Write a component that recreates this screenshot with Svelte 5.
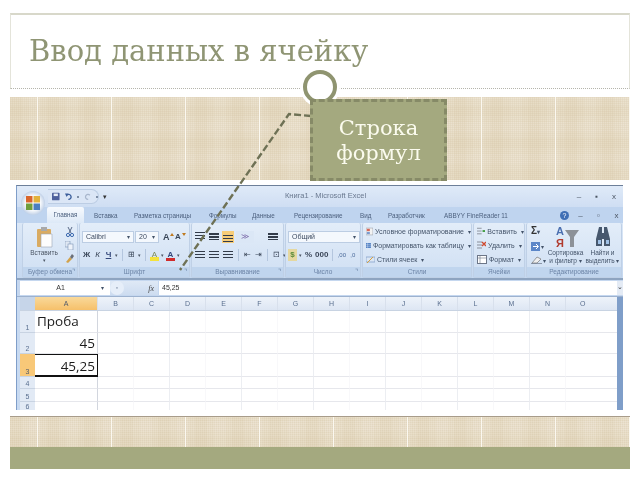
<script>
  // slide "Ввод данных в ячейку" with an Excel 2007 window pasted in
  const tabs = [
    ['Вставка', 10, 23], ['Разметка страницы', 17, 58], ['Формулы', 17, 33], ['Данные', 10, 24],
    ['Рецензирование', 18, 50], ['Вид', 16, 12], ['Разработчик', 16, 38], ['ABBYY FineReader 11', 18, 60]
  ];
  const cols = ['B', 'C', 'D', 'E', 'F', 'G', 'H', 'I', 'J', 'K', 'L', 'M', 'N', 'O'];
  const rows = [
    { n: 1, h: 22, text: 'Проба', cls: 'left' },
    { n: 2, h: 21, text: '45', cls: 'right' },
    { n: 3, h: 23, text: '45,25', cls: 'right sel' },
    { n: 4, h: 12, text: '', cls: '' },
    { n: 5, h: 13, text: '', cls: '' },
    { n: 6, h: 10, text: '', cls: '' }
  ];
</script>

<div class="slide">
  <header class="head"><h1>Ввод данных в ячейку</h1></header>
  <div class="band top"></div>

  <div class="sheet">
    <div class="win">
      <div class="titlebar">
        <div class="office">
          <svg width="22" height="22" viewBox="0 0 22 22"><rect x="4" y="4" width="6.5" height="6.5" fill="#d9662c"/><rect x="11.5" y="4" width="6.5" height="6.5" fill="#e2b23c"/><rect x="4" y="11.5" width="6.5" height="6.5" fill="#6f9e3c"/><rect x="11.5" y="11.5" width="6.5" height="6.5" fill="#4a7fc0"/></svg>
        </div>
        <div class="qat">
          <svg width="9" height="9" viewBox="0 0 9 9"><rect width="9" height="9" rx="1" fill="#4d5f9c"/><rect x="2" y="1" width="5" height="3" fill="#e6ecf6"/></svg>
          <svg width="9" height="9" viewBox="0 0 9 9"><path d="M2 3 A3 3 0 1 1 4 8" fill="none" stroke="#3c5f9c" stroke-width="1.6"/><path d="M0 1 L4 1 L2 5 Z" fill="#3c5f9c"/></svg>
          <i class="dot"></i>
          <svg width="9" height="9" viewBox="0 0 9 9"><path d="M7 3 A3 3 0 1 0 5 8" fill="none" stroke="#a8b6cc" stroke-width="1.5"/></svg>
          <i class="dot"></i>
        </div>
        <span class="drop">▾</span>
        <span class="wintitle">Книга1 - Microsoft Excel</span>
        <div class="winbtns"><span>–</span><span>▪</span><span>x</span></div>
      </div>

      <div class="tabs">
        <span class="tab on">Главная</span>
        {#each tabs as [name, gap, w]}
          <span class="tab" style="margin-left:{gap}px;width:{w}px">{name}</span>
        {/each}
        <span class="help">?</span>
        <span class="mini">–</span><span class="mini">▫</span><span class="mini">x</span>
      </div>

      <div class="ribbon">
        <section class="group g1">
          <div class="body clip">
            <div class="paste">
              <svg width="17" height="22" viewBox="0 0 17 22"><rect x="1" y="3" width="14" height="18" rx="1" fill="#d9ab62"/><rect x="5" y="1" width="6" height="4" fill="#a9a9a9"/><path d="M5 8h11v13H5z" fill="#fdfdfd" stroke="#9aa5b5" stroke-width=".6"/></svg>
              <span>Вставить</span>
              <span class="tiny">▾</span>
            </div>
            <div class="stack3">
              <svg width="8" height="10" viewBox="0 0 8 10"><path d="M2 0 L5 6 M6 0 L3 6" stroke="#5a6a86" fill="none"/><circle cx="2" cy="8" r="1.6" fill="none" stroke="#3d6ab0"/><circle cx="6" cy="8" r="1.6" fill="none" stroke="#3d6ab0"/></svg>
              <svg width="9" height="9" viewBox="0 0 9 9"><rect x="0" y="0" width="5" height="6" fill="#dfe7f2" stroke="#7c93b5" stroke-width=".6"/><rect x="3" y="3" width="5" height="6" fill="#eef3fa" stroke="#7c93b5" stroke-width=".6"/></svg>
              <svg width="9" height="9" viewBox="0 0 9 9"><path d="M1 8 L5 3 L7 5 L3 9 Z" fill="#d2a24a"/><path d="M5 3 L7 0 L9 2 L7 5 Z" fill="#6b6f78"/></svg>
            </div>
          </div>
          <footer>Буфер обмена <b>⌝</b></footer>
        </section>

        <section class="group g2">
          <div class="body col">
            <div class="row">
              <span class="combo" style="width:52px">Calibri<u>▾</u></span>
              <span class="combo" style="width:24px">20<u>▾</u></span>
              <span class="glyph big grow">A</span><span class="glyph big shrink">A</span>
            </div>
            <div class="row btns">
              <span class="glyph"><b>Ж</b></span><span class="glyph"><em>К</em></span><span class="glyph under">Ч</span><span class="tiny">▾</span>
              <i class="sep"></i>
              <span class="glyph">⊞</span><span class="tiny">▾</span>
              <i class="sep"></i>
              <span class="glyph fill">A</span><span class="tiny">▾</span>
              <span class="glyph red">A</span><span class="tiny">▾</span>
            </div>
          </div>
          <footer>Шрифт <b>⌝</b></footer>
        </section>

        <section class="group g3">
          <div class="body col">
            <div class="row tight">
              <span class="al t"></span><span class="al m"></span><span class="al b on"></span>
              <span class="glyph slant">≫</span><i class="gapw"></i><span class="al l"></span>
            </div>
            <div class="row tight">
              <span class="al l"></span><span class="al m"></span><span class="al r"></span>
              <i class="sep"></i>
              <span class="glyph">⇤</span><span class="glyph">⇥</span><i class="sep"></i>
              <span class="glyph">⊡</span><span class="tiny">▾</span>
            </div>
          </div>
          <footer>Выравнивание <b>⌝</b></footer>
        </section>

        <section class="group g4">
          <div class="body col">
            <div class="row"><span class="combo" style="width:72px">Общий<u>▾</u></span></div>
            <div class="row btns">
              <span class="glyph money">$</span><span class="tiny">▾</span><span class="glyph"><b>%</b></span><span class="glyph"><b>000</b></span>
              <i class="sep"></i><span class="glyph small">,00</span><span class="glyph small">,0</span>
            </div>
          </div>
          <footer>Число <b>⌝</b></footer>
        </section>

        <section class="group g5">
          <div class="body list">
            <div><svg width="9" height="9" viewBox="0 0 9 9"><rect width="9" height="9" fill="#f2f2f2" stroke="#8a8f9a" stroke-width=".6"/><rect x="1" y="1" width="4" height="3" fill="#d96a5a"/><rect x="1" y="5" width="4" height="3" fill="#7a9bd0"/></svg>Условное форматирование <u>▾</u></div>
            <div><svg width="9" height="9" viewBox="0 0 9 9"><rect width="9" height="9" fill="#4f7fc4"/><path d="M0 3h9M0 6h9M3 0v9" stroke="#fff" stroke-width=".6"/></svg>Форматировать как таблицу <u>▾</u></div>
            <div><svg width="9" height="9" viewBox="0 0 9 9"><rect y="2" width="9" height="5" fill="#dbe6f4" stroke="#6d8ec0" stroke-width=".6"/><path d="M1 8 L7 2" stroke="#d9a23c"/></svg>Стили ячеек <u>▾</u></div>
          </div>
          <footer>Стили</footer>
        </section>

        <section class="group g6">
          <div class="body list">
            <div><svg width="9" height="9" viewBox="0 0 9 9"><path d="M0 1h5M0 4h5M0 7h5" stroke="#8a8f9a"/><path d="M6 4h3" stroke="#3d9a3d" stroke-width="2"/></svg>Вставить <u>▾</u></div>
            <div><svg width="9" height="9" viewBox="0 0 9 9"><path d="M0 1h5M0 4h5M0 7h5" stroke="#8a8f9a"/><path d="M5 1 L9 5 M9 1 L5 5" stroke="#d04a30" stroke-width="1.4"/></svg>Удалить <u>▾</u></div>
            <div><svg width="10" height="9" viewBox="0 0 10 9"><rect x=".5" y=".5" width="9" height="8" fill="#fff" stroke="#6c7688"/><path d="M0 3h10M3 0v9" stroke="#6c7688" stroke-width=".6"/></svg>Формат <u>▾</u></div>
          </div>
          <footer>Ячейки</footer>
        </section>

        <section class="group g7">
          <div class="body edit">
            <div class="stack3 wide">
              <span class="sigma">Σ<u>▾</u></span>
              <span class="fillb"><svg width="9" height="9" viewBox="0 0 9 9"><rect width="9" height="9" fill="#5b86c8"/><path d="M2 4.5h5M5 2l2.5 2.5L5 7" stroke="#fff" fill="none"/></svg><u>▾</u></span>
              <span class="fillb"><svg width="11" height="8" viewBox="0 0 11 8"><path d="M1 7 L6 1 L10 3 L6 7 Z" fill="#eee" stroke="#777" stroke-width=".7"/><path d="M0 7.5h11" stroke="#6c7688" stroke-width=".7"/></svg><u>▾</u></span>
            </div>
            <div class="big">
              <svg width="26" height="24" viewBox="0 0 26 24"><text x="3" y="10" font-size="11" font-family="Liberation Sans, sans-serif" font-weight="700" fill="#4a6fb0">А</text><text x="3" y="22" font-size="11" font-family="Liberation Sans, sans-serif" font-weight="700" fill="#b03a2e">Я</text><path d="M12 5h14l-5 7v10h-4V12z" fill="#8c9198"/></svg>
              <span>Сортировка<br>и фильтр <u>▾</u></span>
            </div>
            <div class="big">
              <svg width="24" height="24" viewBox="0 0 24 24"><path d="M8 2h3v6h2V2h3l3 12v7h-6v-7h-2v7H5v-7z" fill="#47586e"/><rect x="7" y="15" width="3" height="4" fill="#9fc0e6"/><rect x="15" y="15" width="3" height="4" fill="#9fc0e6"/></svg>
              <span>Найти и<br>выделить <u>▾</u></span>
            </div>
          </div>
          <footer>Редактирование</footer>
        </section>
      </div>

      <div class="fbar">
        <span class="name">A1</span><u class="namearrow">▾</u>
        <span class="pill"><span class="knob">◦</span><em>fx</em></span>
        <span class="input">45,25</span>
        <span class="fold">⌄</span>
      </div>

      <div class="grid">
        <div class="hrow">
          <span class="corner"></span>
          <span class="ch active">A</span>
          {#each cols as c}<span class="ch">{c}</span>{/each}
        </div>
        {#each rows as r}
          <div class="drow" style="height:{r.h}px">
            <span class="rh" class:active={r.n === 3}>{r.n}</span>
            <span class="cell first {r.cls}">{r.text}</span>
            {#each cols as c, i}<span class="cell" class:faint={i % 2 === 0}></span>{/each}
          </div>
        {/each}
      </div>
      <div class="vscroll"></div>
    </div>
  </div>

  <div class="band bottom"></div>
  <footer class="foot"></footer>

  <!-- callout sits over everything -->
  <svg class="leader" width="640" height="480" viewBox="0 0 640 480">
    <path d="M311 116 L289 114 L180 270" fill="none" stroke="#6e7155" stroke-width="2.4" stroke-dasharray="7 3"/>
  </svg>
  <div class="halo"></div>
  <div class="ring"></div>
  <div class="callout">Строка<br>формул</div>
</div>

<style>
  :global(body) { background: #fff; }

  .slide {
    position: relative;
    width: 620px;
    height: 457px;
    margin: 13px 0 0 10px;
    display: flex;
    flex-direction: column;
    font-family: "DejaVu Serif", serif;
    overflow: visible;
  }
  .head {
    height: 76px;
    border: 1px solid #e4e4da;
    border-top: 2px solid #d8d8ca;
    border-bottom: 1px dotted #b5b5ac;
    box-sizing: border-box;
    padding: 17px 0 0 18px;
  }
  h1 {
    margin: 0;
    font-weight: 400;
    font-size: 29px;
    line-height: 38px;
    color: #8f9574;
    filter: blur(.3px);
  }
  .band {
    background-color: #e9dfca;
    background-image:
      linear-gradient(90deg, #fbf8f0 0 1px, transparent 1px),
      repeating-linear-gradient(90deg, rgba(190, 168, 125, .1) 0 1px, transparent 1px 2px),
      repeating-linear-gradient(0deg, rgba(190, 168, 125, .1) 0 1px, transparent 1px 2px),
      repeating-linear-gradient(90deg, rgba(205, 185, 145, .08) 0 12px, transparent 12px 19px, rgba(255, 255, 255, .08) 19px 31px, transparent 31px 37px),
      repeating-linear-gradient(0deg, rgba(205, 185, 145, .07) 0 10px, transparent 10px 16px, rgba(255, 255, 255, .07) 16px 26px, transparent 26px 32px);
    background-size: 74px 100%, auto, auto, auto, auto;
    background-position: 27px 0, 0 0, 0 0, 0 0, 0 0;
  }
  .top { height: 83px; margin-top: 8px; }
  .bottom { height: 30px; border-top: 1px solid #a89c8a; }
  .foot { height: 22px; background: #a4a97f; flex: none; }

  .sheet {
    height: 236px;
    background: #fff;
    padding: 5px 7px 0 6px;
    box-sizing: border-box;
    width: 618px;
    margin-left: 0;
  }
  .win {
    position: relative;
    width: 607px;
    height: 225px;
    background: #c8daf1;
    border-top: 1px solid #6d7f99;
    border-left: 1px solid #7f9ec9;
    box-sizing: border-box;
    overflow: hidden;
    font-family: "Liberation Sans", sans-serif;
    font-size: 7px;
    color: #4b5f7d;
    filter: blur(.5px);
  }
  .win u { text-decoration: none; font-size: 6px; color: #44546a; }

  .titlebar {
    height: 21px;
    display: flex;
    align-items: center;
    background: linear-gradient(#dfeaf8, #cfdef3);
    padding-left: 4px;
    position: relative;
  }
  .office {
    width: 24px;
    height: 24px;
    border-radius: 50%;
    margin-top: 12px;
    background: radial-gradient(#fff 40%, #c2d2e8 70%, #8ea6c6);
    display: flex;
    align-items: center;
    justify-content: center;
    z-index: 2;
    flex: none;
  }
  .qat {
    display: flex;
    gap: 5px;
    align-items: center;
    height: 13px;
    width: 46px;
    margin-left: 3px;
    padding-left: 4px;
    border-radius: 0 8px 8px 0;
    background: #dbe6f6;
    border: 1px solid #bccde4;
    border-left: 0;
  }
  .dot { width: 2px; height: 2px; background: #7e8ea6; }
  .drop { margin-left: 4px; color: #333; font-size: 7px; }
  .wintitle { position: absolute; left: 268px; top: 5px; font-size: 7.5px; color: #69788f; }
  .winbtns { margin-left: auto; display: flex; gap: 14px; padding-right: 7px; color: #4b5563; font-size: 8px; }

  .tabs {
    height: 16px;
    display: flex;
    align-items: center;
    padding-left: 30px;
    background: #bfd4ef;
    white-space: nowrap;
  }
  .tab { flex: none; font-size: 6.3px; }
  .tab.on {
    width: 37px;
    height: 16px;
    line-height: 16px;
    text-align: center;
    background: linear-gradient(#f7fafe, #dde9f7);
    border-radius: 2px 2px 0 0;
    box-sizing: border-box;
  }
  .help {
    margin-left: auto;
    width: 9px;
    height: 9px;
    border-radius: 50%;
    background: #3f6fb5;
    color: #fff;
    text-align: center;
    line-height: 9px;
  }
  .mini { width: 13px; margin-left: 5px; text-align: center; color: #4b5563; font-size: 8px; }

  .ribbon {
    display: flex;
    gap: 1px;
    height: 55px;
    padding-left: 5px;
    background: linear-gradient(#dce8f7, #c5d8f0);
    border-bottom: 2px solid #8ea4c0;
  }
  .group {
    display: flex;
    flex-direction: column;
    flex: none;
    border: 1px solid #bfd0e6;
    border-top: 0;
    border-radius: 2px;
    background: linear-gradient(#e3edf9, #cfdff3);
    box-sizing: border-box;
  }
  .group footer {
    height: 10px;
    flex: none;
    line-height: 10px;
    text-align: center;
    font-size: 6.5px;
    color: #6c84a6;
    background: #c0d5ee;
    position: relative;
  }
  .group footer b { position: absolute; right: 2px; top: 0; font-weight: 400; }
  .body { flex: 1; min-height: 0; }
  .col { display: flex; flex-direction: column; gap: 5px; padding: 7px 0 0 2px; }
  .row { display: flex; align-items: center; gap: 1px; height: 13px; }
  .btns { gap: 2px; }
  .tight { gap: 2px; }
  .g1 { width: 56px; }
  .g2 { width: 111px; }
  .g3 { width: 93px; }
  .g4 { width: 76px; }
  .g5 { width: 110px; }
  .g6 { width: 52px; }
  .g7 { width: 96px; }

  .clip { display: flex; padding: 3px 3px 0 6px; justify-content: space-between; }
  .paste { display: flex; flex-direction: column; align-items: center; font-size: 6.5px; color: #4b5563; width: 30px; gap: 1px; }
  .tiny { font-size: 5px; color: #4b5563; }
  .stack3 { display: flex; flex-direction: column; gap: 4px; align-items: center; padding-top: 1px; }
  .stack3.wide { align-items: flex-start; gap: 5px; padding: 1px 0 0 4px; width: 21px; }

  .combo {
    display: flex;
    justify-content: space-between;
    align-items: center;
    height: 12px;
    padding: 0 3px;
    box-sizing: border-box;
    background: #f4f8fd;
    border: 1px solid #bccde3;
    color: #3c4a60;
    flex: none;
  }
  .glyph {
    display: inline-flex;
    align-items: center;
    justify-content: center;
    min-width: 9px;
    height: 12px;
    font-size: 8px;
    color: #3a4658;
    font-style: normal;
  }
  .grow { margin-left: 3px; }
  .shrink { font-size: 8px !important; }
  .grow::after, .shrink::after {
    content: "";
    position: absolute;
    right: 0;
    top: 2px;
    border-left: 2px solid transparent;
    border-right: 2px solid transparent;
  }
  .grow::after { border-bottom: 3px solid #c07a20; }
  .shrink::after { border-top: 3px solid #c07a20; }
  .under { text-decoration: underline; font-weight: 700; color: #33477a; }
  .fill { background: linear-gradient(transparent 70%, #f4e23c 70%); color: #7d8a55; }
  .red { background: linear-gradient(transparent 72%, #d12b2b 72%); font-weight: 700; color: #33477a; }
  .slant { color: #7a68a8; width: 18px; background: #dbe7f6; }
  .money { color: #5a8a3a; font-weight: 700; background: #e5d8a0; }
  .small { font-size: 6px; color: #4a6a9a; }
  .sep { width: 1px; height: 12px; background: #b4c6de; margin: 0 2px; flex: none; }
  .gapw { width: 9px; flex: none; }
  .al {
    width: 12px;
    height: 12px;
    flex: none;
    box-sizing: border-box;
    background: repeating-linear-gradient(#333c4a 0 1.5px, transparent 1.5px 3px) center / 10px 8px no-repeat;
  }
  .al.t { background-position: center 1px; }
  .al.b { background-position: center 4px; }
  .al.on { background-color: #f8cd78; }

  .list { display: flex; flex-direction: column; gap: 4px; padding: 3px 0 0 3px; color: #44546a; white-space: nowrap; overflow: hidden; }
  .list div { display: flex; align-items: center; gap: 2px; height: 10px; }
  .list u { margin-left: 2px; }

  .edit { display: flex; padding-top: 2px; }
  .sigma { font-size: 10px; font-weight: 700; color: #333; line-height: 10px; }
  .fillb { display: flex; align-items: center; gap: 1px; }
  .big { display: flex; flex-direction: column; align-items: center; width: 37px; text-align: center; font-size: 6.5px; line-height: 8px; color: #44546a; flex: none; white-space: nowrap; }
  .glyph.big { display: inline-flex; flex-direction: row; align-items: center; justify-content: flex-start; position: relative; width: 11px; font-size: 9px; font-weight: 700; line-height: 12px; color: #3a4658; }

  .fbar {
    height: 17px;
    display: flex;
    align-items: center;
    padding: 0 0 0 3px;
    background: #c5d7ef;
    border-bottom: 1px solid #9db2cf;
    box-sizing: border-box;
  }
  .name { width: 81px; height: 14px; line-height: 14px; text-align: center; background: #fff; color: #333; flex: none; }
  .namearrow { width: 9px; background: #fff; height: 14px; line-height: 14px; flex: none; }
  .pill { display: flex; align-items: center; width: 48px; height: 14px; justify-content: space-between; padding: 0 4px 0 0; box-sizing: border-box; flex: none; background: linear-gradient(#dfe9f6, #cddcf0); }
  .knob { width: 14px; height: 14px; border-radius: 50%; background: #e6eef9; text-align: center; line-height: 13px; }
  .pill em { font-family: "Liberation Serif", serif; font-size: 8px; color: #444; }
  .input { flex: 1; height: 14px; line-height: 14px; background: #fff; padding-left: 3px; margin-left: 1px; color: #333; }
  .fold { width: 6px; text-align: center; background: #e4ebf5; height: 14px; line-height: 12px; color: #333; flex: none; }

  .grid { margin-left: 3px; margin-right: 6px; background: #fff; }
  .hrow { display: flex; height: 14px; border-bottom: 1px solid #c8d3e2; box-sizing: border-box; background: linear-gradient(#eef3fa, #dde6f3); }
  .corner { width: 15px; flex: none; background: #c6d5e9; }
  .ch { flex: 0 0 36px; text-align: center; line-height: 13px; font-size: 7px; color: #5a6f8f; border-right: 1px solid #d8e0ec; box-sizing: border-box; }
  .ch.active { flex-basis: 63px; background: linear-gradient(#f9d99a, #f6c06a); color: #4f5a6a; }
  /* last column runs on under the scrollbar, its letter stays where a normal column has it */
  .ch:last-child { flex-grow: 1; text-align: left; padding-left: 14px; border-right: 0; }
  .drow { display: flex; box-sizing: border-box; overflow: hidden; }
  .rh {
    width: 15px;
    flex: none;
    background: #e2eaf5;
    border-bottom: 1px solid #c8d3e2;
    font-size: 7px;
    color: #5a6f8f;
    text-align: center;
    box-sizing: border-box;
    display: flex;
    align-items: flex-end;
    justify-content: center;
    padding-bottom: 1px;
  }
  .rh.active { background: #f8c878; color: #4f5a6a; }
  .cell {
    flex: 0 0 36px;
    border-right: 1px solid #eceef2;
    border-bottom: 1px solid #e6e7ec;
    box-sizing: border-box;
  }
  .cell:last-child { flex-grow: 1; border-right: 0; }
  .cell.faint { border-right-color: #f8f8fa; }
  .cell.first {
    flex-basis: 63px;
    font-family: "Open Sans", sans-serif;
    font-size: 13.5px;
    line-height: 20px;
    color: #1c1c1c;
    padding: 0 2px;
    border-right-color: #d2d6de;
  }
  .cell.right { text-align: right; }
  .cell.sel { border: 2px solid #111; border-width: 1.5px 1px 2px 0; line-height: 22px; }
  .vscroll { position: absolute; right: 0; top: 111px; bottom: 0; width: 6px; background: #7f9ec9; }

  .leader { position: absolute; left: -10px; top: -13px; pointer-events: none; }
  .halo { position: absolute; left: 290px; top: 54px; width: 40px; height: 40px; border-radius: 50%; background: #fff; }
  .ring {
    position: absolute;
    left: 293px;
    top: 57px;
    width: 34px;
    height: 34px;
    box-sizing: border-box;
    border-radius: 50%;
    border: 4px solid #8f9470;
    background: #fff;
  }
  .callout {
    position: absolute;
    left: 300px;
    top: 86px;
    width: 137px;
    height: 82px;
    box-sizing: border-box;
    background: #a4a97f;
    border: 3px dashed #868a67;
    color: #fbfbee;
    font-size: 21px;
    line-height: 25px;
    text-align: center;
    padding-top: 14px;
    filter: blur(.25px);
  }
</style>
